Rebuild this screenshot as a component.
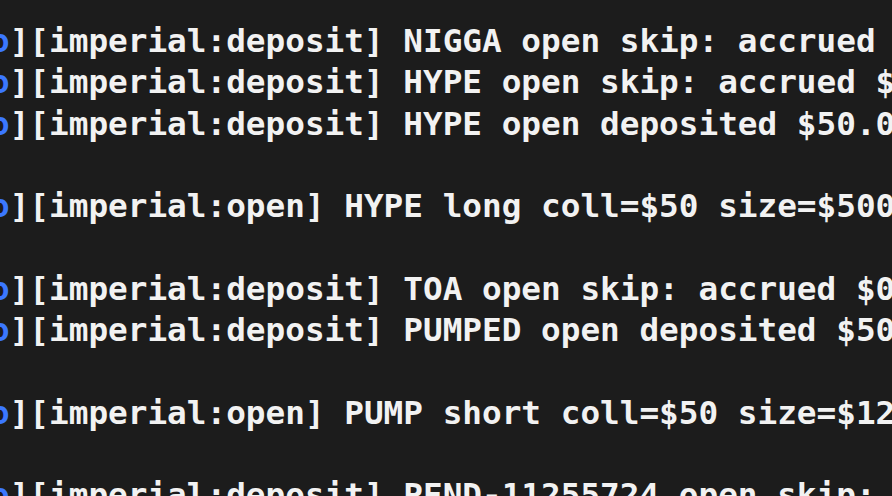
const lines: (string | null)[] = [
    "][imperial:deposit] NIGGA open skip: accrued $0.00",
    "][imperial:deposit] HYPE open skip: accrued $0.00",
    "][imperial:deposit] HYPE open deposited $50.00",
    null,
    "][imperial:open] HYPE long coll=$50 size=$500",
    null,
    "][imperial:deposit] TOA open skip: accrued $0.00",
    "][imperial:deposit] PUMPED open deposited $50.00",
    null,
    "][imperial:open] PUMP short coll=$50 size=$125",
    null,
    "][imperial:deposit] PEND-11255724 open skip: accrued",
];

const App = () => {
    return (
        <div className="w-[892px] h-[496px] overflow-hidden bg-[#1c1c1c] pt-[21px]">
            <div className="-ml-[10px] font-['DejaVu_Sans_Mono',monospace] font-bold text-[32.7px] leading-[41.3px] text-[#f2f2f2]">
                {lines.map((line, index) => (
                    <div key={index} className="h-[41.3px] whitespace-pre">
                        {line !== null && (
                            <>
                                <span className="text-[#3b78ff]">o</span>
                                {line}
                            </>
                        )}
                    </div>
                ))}
            </div>
        </div>
    );
};

export default App;
